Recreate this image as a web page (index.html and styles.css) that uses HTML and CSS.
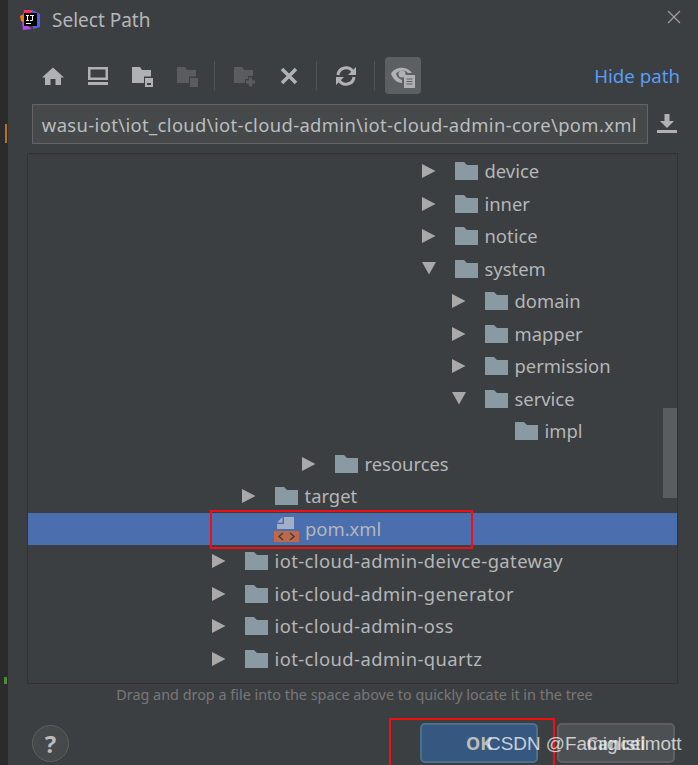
FILE: index.html
```html
<!DOCTYPE html>
<html lang="en">
<head>
<meta charset="utf-8">
<title>Select Path</title>
<link rel="stylesheet" href="styles.css">
</head>
<body>
<svg class="defs" width="0" height="0">
  <defs>
    <symbol id="folder" viewBox="0 0 23 18"><path d="M0 0H9L12 3H23V18H0Z" fill="#8a9aa3"/></symbol>
    <symbol id="right" viewBox="0 0 14 14"><path d="M0 0L13.500 7L0 14Z" fill="#a9a9a9"/></symbol>
    <symbol id="down" viewBox="0 0 14 14"><path d="M0 0H14L7 12.500Z" fill="#a9a9a9"/></symbol>
  </defs>
</svg>
<div class="screen">
  <div class="strip"><span class="mark-orange"></span><span class="mark-green"></span></div>
  <main class="dialog">
    <header class="titlebar">
      <svg class="logo" viewBox="0 0 20 20" width="20" height="20">
        <path d="M4 0H13L10 6H3Z" fill="#fe315d"/>
        <path d="M12 0L20 4V17L13 19Z" fill="#4a63e8"/>
        <path d="M0 6L4 4V13L1 11Z" fill="#f97a12"/>
        <path d="M2 12L12 19L3 20Z" fill="#b74af7"/>
        <rect x="4" y="3" width="13" height="13" fill="#000"/>
        <path d="M6 5H9V6H8V10H9V11H6V10H7V6H6ZM10 5H14V6H13V10C13 11 12 11 11 11H10V10H12V6H10ZM6 13H11V14H6Z" fill="#fff"/>
      </svg>
      <h1 class="title">Select Path</h1>
      <svg class="close" viewBox="0 0 14 14" width="14" height="14"><path d="M1 1L13 13M13 1L1 13" stroke="#a0a0a0" stroke-width="1.200" fill="none"/></svg>
    </header>
    <div class="toolbar">
      <svg class="tool" viewBox="0 0 22 22"><path d="M11 2.500L22 12.500H19V20H13.500V14H8.500V20H3V12.500H0Z" fill="#afb1b3"/></svg>
      <svg class="tool" viewBox="0 0 22 22"><path d="M1 2H21V15H1ZM3.500 4.500V12.500H18.500V4.500ZM1 17H21V20H1Z" fill="#afb1b3" fill-rule="evenodd"/></svg>
      <svg class="tool" viewBox="0 0 22 22"><path d="M1 2H9L11 5H20V11.500H13V18H1Z" fill="#afb1b3"/><path d="M14 13H22V22H14Z" fill="#afb1b3"/><rect x="16" y="18" width="4" height="2" fill="#3c3f41"/></svg>
      <svg class="tool" viewBox="0 0 22 22"><path d="M1 2H9L11 5H20V11.500H13V18H1Z" fill="#5a5c5d"/><path d="M14 13H22V22H14Z" fill="#5a5c5d"/></svg>
      <span class="sep"></span>
      <svg class="tool" viewBox="0 0 22 22"><path d="M1 2H9L11 5H20V11H15V14H12V18H1Z" fill="#5a5c5d"/><path d="M16 12.500H19V15.500H22V18.500H19V21.500H16V18.500H13V15.500H16Z" fill="#5a5c5d"/></svg>
      <svg class="tool" viewBox="0 0 22 22"><path d="M4 4L18 18M18 4L4 18" stroke="#afb1b3" stroke-width="3.500" fill="none"/></svg>
      <span class="sep"></span>
      <svg class="tool" viewBox="0 0 22 22"><path d="M3 10A8 8 0 0 1 18 7" stroke="#afb1b3" stroke-width="3" fill="none"/><path d="M21 2V10H13Z" fill="#afb1b3"/><path d="M19 12A8 8 0 0 1 4 15" stroke="#afb1b3" stroke-width="3" fill="none"/><path d="M1 20V12H9Z" fill="#afb1b3"/></svg>
      <span class="sep"></span>
      <span class="toggle">
        <svg class="tool" viewBox="0 0 26 26"><path d="M1 11C4 4 16 2 22 10H18C15 6 8 7 6 11C7 14 9 16 12 17V20C7 20 3 16 1 11Z" fill="#afb1b3"/><circle cx="12" cy="11" r="3.500" fill="#afb1b3"/><path d="M14 12H25V25H14Z" fill="#afb1b3"/><path d="M16.500 16H22.500M16.500 18.500H22.500M16.500 21H22.500" stroke="#5c6063" stroke-width="1.200"/></svg>
      </span>
      <a class="hide-path">Hide path</a>
    </div>
    <div class="path-row">
      <div class="path-field"><span class="path-text">wasu-iot\iot_cloud\iot-cloud-admin\iot-cloud-admin-core\pom.xml</span></div>
      <svg class="download" viewBox="0 0 20 20" width="20" height="20"><path d="M7.500 0H12.500V7H17L10 14L3 7H7.500ZM0 16H20V19H0Z" fill="#afb1b3"/></svg>
    </div>
    <section class="tree">
      <div class="row d7"><svg class="arrow"><use href="#right"/></svg><svg class="folder"><use href="#folder"/></svg><span>device</span></div>
      <div class="row d7"><svg class="arrow"><use href="#right"/></svg><svg class="folder"><use href="#folder"/></svg><span>inner</span></div>
      <div class="row d7"><svg class="arrow"><use href="#right"/></svg><svg class="folder"><use href="#folder"/></svg><span>notice</span></div>
      <div class="row d7"><svg class="arrow"><use href="#down"/></svg><svg class="folder"><use href="#folder"/></svg><span>system</span></div>
      <div class="row d8"><svg class="arrow"><use href="#right"/></svg><svg class="folder"><use href="#folder"/></svg><span>domain</span></div>
      <div class="row d8"><svg class="arrow"><use href="#right"/></svg><svg class="folder"><use href="#folder"/></svg><span>mapper</span></div>
      <div class="row d8"><svg class="arrow"><use href="#right"/></svg><svg class="folder"><use href="#folder"/></svg><span>permission</span></div>
      <div class="row d8"><svg class="arrow"><use href="#down"/></svg><svg class="folder"><use href="#folder"/></svg><span>service</span></div>
      <div class="row d9"><span class="arrow"></span><svg class="folder"><use href="#folder"/></svg><span>impl</span></div>
      <div class="row d3"><svg class="arrow"><use href="#right"/></svg><svg class="folder"><use href="#folder"/></svg><span>resources</span></div>
      <div class="row d1"><svg class="arrow"><use href="#right"/></svg><svg class="folder"><use href="#folder"/></svg><span>target</span></div>
      <div class="row d1 selected"><span class="arrow"></span>
        <svg class="folder file" viewBox="0 0 25 25"><path d="M10 0H20V12H3V7H10Z" fill="#9fb0c8"/><path d="M3 5.500L8.500 0V5.500Z" fill="#9fb0c8"/><rect x="0" y="14" width="25" height="11" fill="#c0694a"/><path d="M9 16L5 19.500L9 23M16 16L20 19.500L16 23" stroke="#3c3f41" stroke-width="1.500" fill="none"/></svg>
        <span>pom.xml</span></div>
      <div class="row d0 hyphenated"><svg class="arrow"><use href="#right"/></svg><svg class="folder"><use href="#folder"/></svg><span>iot-cloud-admin-deivce-gateway</span></div>
      <div class="row d0 hyphenated"><svg class="arrow"><use href="#right"/></svg><svg class="folder"><use href="#folder"/></svg><span>iot-cloud-admin-generator</span></div>
      <div class="row d0 hyphenated"><svg class="arrow"><use href="#right"/></svg><svg class="folder"><use href="#folder"/></svg><span>iot-cloud-admin-oss</span></div>
      <div class="row d0 hyphenated"><svg class="arrow"><use href="#right"/></svg><svg class="folder"><use href="#folder"/></svg><span>iot-cloud-admin-quartz</span></div>
      <span class="scrollbar"></span>
    </section>
    <p class="hint">Drag and drop a file into the space above to quickly locate it in the tree</p>
    <footer class="footer">
      <span class="help">?</span>
      <div class="buttons">
        <button class="btn primary">OK</button>
        <button class="btn">Cancel</button>
      </div>
    </footer>
  </main>
  <span class="redbox box-pom"></span>
  <span class="redbox box-ok"></span>
  <span class="watermark">CSDN @Famiglistimott</span>
</div>
</body>
</html>
```
FILE: styles.css
```css
* { box-sizing: border-box; }
html, body { margin: 0; height: 100%; overflow: hidden; }
body { background: #3c3f41; font-family: "Noto Sans", "Open Sans", sans-serif; color: #b4b6b8; }
.defs { position: absolute; }
.screen { position: relative; display: flex; width: 698px; height: 765px; overflow: hidden; }
.strip { position: relative; flex: 0 0 8px; background: #2b2b2b; }
.mark-orange { position: absolute; left: 5px; top: 124px; width: 2px; height: 19px; background: #b9701f; }
.mark-green { position: absolute; left: 4px; top: 677px; width: 3px; height: 7px; background: #4f8a3c; }
.dialog { flex: 1; display: flex; flex-direction: column; background: #3c3f41; padding-left: 19px; padding-right: 20px; }
.titlebar { display: flex; align-items: center; height: 40px; margin-left: -7px; }
.logo { margin-right: 12px; flex: none; }
.title { margin: 0; font-size: 19px; font-weight: 400; color: #b4b6b8; }
.close { margin-left: auto; margin-right: -3px; margin-top: -6px; }
.toolbar { display: flex; align-items: center; height: 37px; margin-top: 17px; padding-left: 15px; }
.tool { width: 22px; height: 22px; margin-right: 22.500px; flex: none; }
.sep { width: 1px; height: 29px; background: #505355; margin-right: 18px; margin-left: -6px; flex: none; }
.toggle { display: flex; align-items: center; justify-content: center; width: 36px; height: 37px; border-radius: 4px; background: #5c6063; margin-left: -8px; }
.toggle .tool { margin: 0; width: 26px; height: 26px; }
.hide-path { margin-left: auto; margin-right: -2px; font-size: 18.700px; color: #589df6; }
.path-row { display: flex; align-items: center; margin-top: 10px; margin-left: 5px; }
.path-field { width: 616px; height: 40px; flex: none; display: flex; align-items: center; justify-content: flex-end; overflow: hidden; padding: 0 10px; background: #45494a; border: 1px solid #646464; }
.path-text { font-size: 18.400px; letter-spacing: .37px; white-space: nowrap; color: #bbbdbf; }
.download { margin-left: 9px; }
.tree { position: relative; width: 651px; height: 531px; margin-top: 9px; padding-top: 1px; background: #3c3f41; border: 1px solid #323232; flex: none; }
.row { display: flex; align-items: center; height: 32.500px; font-size: 18.400px; white-space: nowrap; }
.row span:last-of-type { line-height: 1; }
.hyphenated { letter-spacing: .42px; }
.arrow { width: 14px; height: 14px; flex: none; margin-right: 19px; }
.folder { width: 23px; height: 18px; flex: none; margin-right: 6.500px; }
.file { width: 25px; height: 25px; margin-left: -1px; margin-right: 6px; margin-top: 2px; }
.d0 { padding-left: 184px; }
.d1 { padding-left: 214px; }
.d3 { padding-left: 274px; }
.d7 { padding-left: 394px; }
.d8 { padding-left: 424px; }
.d9 { padding-left: 454px; }
.selected { background: #4b6eaf; }
.scrollbar { position: absolute; right: 0; top: 254px; width: 14px; height: 90px; background: #5a5d5f; }
.hint { margin: 1px 0 0; padding-left: 4px; text-align: center; font-size: 14.400px; line-height: 20px; color: #787878; }
.footer { display: flex; align-items: center; justify-content: space-between; margin-top: 18px; padding-left: 5px; }
.help { display: flex; align-items: center; justify-content: center; width: 37px; height: 37px; border-radius: 50%; background: #45494a; border: 1px solid #5e6060; font-size: 24px; font-weight: 700; color: #bbbbbb; }
.buttons { display: flex; gap: 19px; margin-right: 3px; }
.btn { width: 118px; height: 40px; border-radius: 5px; border: 2px solid #5e6060; background: #4c5052; color: #b4b6b8; font: 700 18px "Noto Sans", sans-serif; }
.primary { background: #365880; border-color: #4c708c; color: #bbbbbb; }
.redbox { position: absolute; border: 2px solid #f00f14; pointer-events: none; }
.box-pom { left: 210px; top: 510px; width: 263px; height: 39px; }
.box-ok { left: 389px; top: 718px; width: 166px; height: 60px; }
.watermark { position: absolute; left: 487px; top: 733px; font: 18.900px "Liberation Sans", sans-serif; color: rgba(255,255,255,.72); white-space: nowrap; }
```
